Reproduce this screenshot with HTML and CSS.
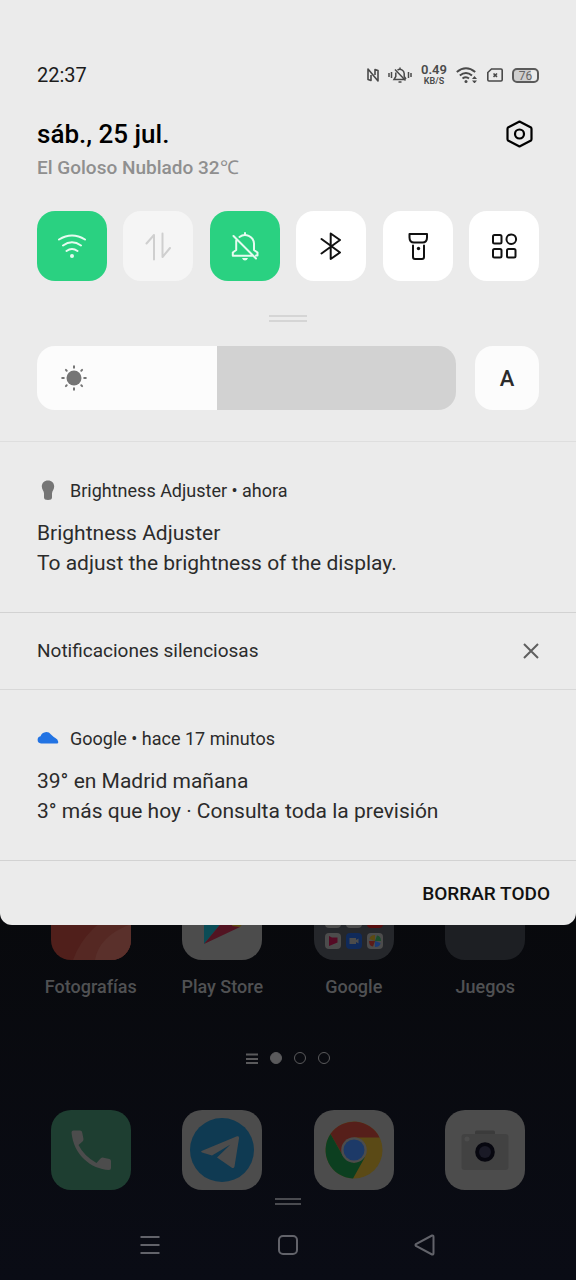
FILE: index.html
```html
<!DOCTYPE html>
<html lang="es">

<head>
    <meta charset="UTF-8">
    <meta name="viewport" content="width=device-width, initial-scale=1.0">
    <title>Notificaciones</title>
    <link rel="stylesheet" href="styles.css">
</head>

<body>

    <main class="panel">
        <section class="quick-settings">
            <div class="status-bar">
                <span class="clock">22:37</span>
                <div class="status-icons">
                    <svg width="12" height="14" viewBox="0 0 12 14" fill="none" stroke="#4a4a4a" stroke-width="1.600" stroke-linejoin="round">
                        <path d="M4 7V12.500L1 11.500V1L11 13V2.500L8 1.500V7" />
                    </svg>
                    <svg width="24" height="16" viewBox="0 0 24 16" fill="none" stroke="#4a4a4a" stroke-width="1.500">
                        <path d="M1 6v4M3.500 5v6M20.500 5v6M23 6v4" />
                        <path d="M9.500 3.200A4.200 4.200 0 0 1 16.200 6.500V9.500L18 12M7.800 5.500V9.500L6 12.500H16.500M7 2.500L17.500 13.500M12 0.500V2M10.500 15H13.500" />
                    </svg>
                    <div class="speed">
                        <span class="speed-value">0.49</span>
                        <span class="speed-unit">KB/S</span>
                    </div>
                    <svg width="22" height="16" viewBox="0 0 22 16" fill="none" stroke="#4a4a4a" stroke-width="2">
                        <path d="M.8 5Q10 -2.500 19.200 5M3.800 8.500Q10 3.500 16 8.500M6.500 11.500Q10 9 13 11.500" />
                        <circle cx="10" cy="14.500" r="1.500" fill="#4a4a4a" stroke="none" />
                        <path d="M16 12L18.500 9L21 12zM16 13.500L18.500 16.500L21 13.500z" fill="#4a4a4a" stroke="none" />
                    </svg>
                    <svg width="16" height="14" viewBox="0 0 16 14" fill="none" stroke="#4a4a4a" stroke-width="1.600">
                        <path d="M4.500 1H14Q15.200 1 15.200 2.200V11.800Q15.200 13 14 13H2Q.8 13 .8 11.800V4.500z" />
                        <path d="M6.500 5.500L10 8.800M10 5.500L6.500 8.800" />
                    </svg>
                    <div class="battery">76</div>
                </div>
            </div>

            <header class="date-row">
                <div>
                    <h1 class="date">sáb., 25 jul.</h1>
                    <p class="weather">El Goloso Nublado 32℃</p>
                </div>
                <button class="settings" aria-label="Ajustes">
                    <svg width="28" height="28" viewBox="0 0 28 28" fill="none" stroke="#000" stroke-width="2.200" stroke-linejoin="round">
                        <path d="M14.500 1.500L26 7.500Q26.500 8 26.500 9V19Q26.500 20 26 20.500L14.500 26.500L3 20.500Q2.500 20 2.500 19V9Q2.500 8 3 7.500z" />
                        <circle cx="14.500" cy="14" r="4.500" />
                    </svg>
                </button>
            </header>

            <div class="tiles">
                <button class="tile tile-on" aria-label="Wi-Fi">
                    <svg class="tile-icon" viewBox="0 0 30 30">
                        <path d="M2 8.500Q15 .5 28 8.500M6 14.500Q15 8 24 14.500M9.500 20Q15 16 20.500 20" />
                        <circle class="solid" cx="15" cy="25" r="2" />
                    </svg>
                </button>
                <button class="tile tile-off" aria-label="Datos móviles">
                    <svg class="tile-icon" viewBox="0 0 30 30">
                        <path d="M3.500 12.500L11 4V28.500M19.500 2.500V26L27 17" />
                    </svg>
                </button>
                <button class="tile tile-on" aria-label="Silencio">
                    <svg class="tile-icon" viewBox="0 0 30 30">
                        <path d="M9.500 6A9 9 0 0 1 24 12.500V19L27.500 21.500V24.500H26M6.200 9.500V19L2.800 21.500V24.800H22M3.500 5L26 27.500M15 2V4" />
                        <path class="solid" d="M12 27H18Q17 29.500 15 29.500T12 27z" />
                    </svg>
                </button>
                <button class="tile" aria-label="Bluetooth">
                    <svg class="tile-icon" viewBox="0 0 30 30">
                        <path d="M5.500 8L24 21.500L14.700 28V2.500L24 9L5.500 22.500" />
                    </svg>
                </button>
                <button class="tile" aria-label="Linterna">
                    <svg class="tile-icon" viewBox="0 0 30 30">
                        <path d="M6.500 3H24V6.500Q24 11.500 19.500 11.500H11Q6.500 11.500 6.500 6.500zM10 14.500V26Q10 28 12 28H19Q21 28 21 26V14.500" />
                        <circle class="solid" cx="15.500" cy="17.500" r="1.700" />
                    </svg>
                </button>
                <button class="tile" aria-label="Más ajustes">
                    <svg class="tile-icon" viewBox="0 0 30 30">
                        <rect x="4" y="4" width="8.500" height="8.500" rx="1.500" />
                        <circle cx="22.300" cy="8.200" r="4.800" />
                        <rect x="4" y="18" width="8.500" height="8.500" rx="1.500" />
                        <rect x="18" y="18" width="8.500" height="8.500" rx="1.500" />
                    </svg>
                </button>
            </div>

            <div class="handle"></div>

            <div class="brightness-row">
                <div class="brightness">
                    <input class="brightness-slider" type="range" min="0" max="100" value="43" aria-label="Brillo" style="--level: 43%">
                    <svg class="sun" viewBox="0 0 26 26" stroke="#757575" stroke-width="2" stroke-linecap="round">
                        <circle cx="13" cy="13" r="7.500" fill="#757575" stroke="none" />
                        <path d="M13 1.200V2.800M13 23.200V24.800M1.200 13H2.800M23.200 13H24.800M4.900 4.900L5.700 5.700M20.300 20.300L21.100 21.100M4.900 21.100L5.700 20.300M20.300 5.700L21.100 4.900" />
                    </svg>
                </div>
                <button class="auto" aria-label="Brillo automático">A</button>
            </div>
        </section>

        <article class="notification">
            <div class="notification-app">
                <svg width="22" height="22" viewBox="0 0 22 22" fill="#757575">
                    <path d="M11 .5C7.200 .5 4.800 3.100 4.800 6.500C4.800 9.500 7 11 7 13.500V17.500Q7 20 11 20T15 17.500V13.500C15 11 17.200 9.500 17.200 6.500C17.200 3.100 14.800 .5 11 .5z" />
                </svg>
                <span>Brightness Adjuster • ahora</span>
            </div>
            <h2 class="notification-text">Brightness Adjuster</h2>
            <p class="notification-text">To adjust the brightness of the display.</p>
        </article>

        <div class="silent-row">
            <h2 class="silent-title">Notificaciones silenciosas</h2>
            <button class="close" aria-label="Cerrar">
                <svg width="16" height="16" viewBox="0 0 16 16" stroke="#5f5f5f" stroke-width="2">
                    <path d="M1 1L15 15M15 1L1 15" />
                </svg>
            </button>
        </div>

        <article class="notification">
            <div class="notification-app">
                <svg width="22" height="22" viewBox="0 0 22 22" fill="#2273e3">
                    <path d="M4 15.500A3.700 3.700 0 0 1 3.500 8.200A6 6 0 0 1 14 6.500Q16.500 9 18 9.700Q21 11 21.300 14Q21.300 15.500 20 15.500z" />
                </svg>
                <span>Google • hace 17 minutos</span>
            </div>
            <h2 class="notification-text">39° en Madrid mañana</h2>
            <p class="notification-text">3° más que hoy · Consulta toda la previsión</p>
        </article>

        <footer class="panel-footer">
            <button class="clear-all">BORRAR TODO</button>
        </footer>
    </main>

    <section class="home">
        <div class="apps">
            <a class="app" href="#">
                <svg class="app-icon" viewBox="0 0 80 80">
                    <rect width="80" height="80" fill="#501f1b" />
                    <path d="M22 80Q34 45 80 24V80z" fill="#552823" />
                    <path d="M44 80Q48 56 80 44V80z" fill="#5a302b" />
                </svg>
                <span>Fotografías</span>
            </a>
            <a class="app" href="#">
                <svg class="app-icon" viewBox="0 0 80 80">
                    <rect width="80" height="80" fill="#4c4c4c" />
                    <path d="M22 16V64L42 40z" fill="#0b4c56" />
                    <path d="M22 64L41 41L51 45L58 47z" fill="#521422" />
                    <path d="M50 46L52 34L64 40L58 47z" fill="#5c4a12" />
                </svg>
                <span>Play Store</span>
            </a>
            <a class="app" href="#">
                <svg class="app-icon" viewBox="0 0 80 80">
                    <rect width="80" height="80" fill="#25272b" />
                    <rect x="11" y="32" width="16" height="16" rx="4" fill="#4c4c4c" />
                    <rect x="32" y="32" width="16" height="16" rx="4" fill="#4c4c4c" />
                    <rect x="53" y="32" width="16" height="16" rx="4" fill="#560d0d" />
                    <rect x="11" y="53" width="16" height="16" rx="4" fill="#4c4c4c" />
                    <path d="M15 56L18 57.500L23.500 57.500V62.500L15 66z" fill="#540a24" />
                    <rect x="32" y="53" width="16" height="16" rx="4" fill="#102a5a" />
                    <path d="M35.500 58h6.500v2l2.500-1.500v5L42 62v2h-6.500z" fill="#4c4c4c" />
                    <rect x="53" y="53" width="16" height="16" rx="4" fill="#4c4c4c" />
                    <path d="M61 61V55Q56 55 55.500 59z" fill="#5c4a12" />
                    <path d="M61 61H67Q67 56 63 55.500z" fill="#1b4d2c" />
                    <path d="M61 61V67Q66 67 66.500 63z" fill="#1c3b75" />
                    <path d="M61 61H55Q55 66 59 66.500z" fill="#5c1c18" />
                </svg>
                <span>Google</span>
            </a>
            <a class="app" href="#">
                <svg class="app-icon" viewBox="0 0 80 80">
                    <rect width="80" height="80" fill="#1d1f23" />
                </svg>
                <span>Juegos</span>
            </a>
        </div>

        <div class="pages">
            <svg width="12" height="12" viewBox="0 0 12 12" stroke="#5a5a5c" stroke-width="2">
                <path d="M0 2.500H12M0 7H12M0 11H12" />
            </svg>
            <span class="dot dot-current"></span>
            <span class="dot"></span>
            <span class="dot"></span>
        </div>

        <div class="apps">
            <a class="app" href="#" aria-label="Teléfono">
                <svg class="app-icon" viewBox="0 0 80 80">
                    <rect width="80" height="80" fill="#1e3e31" />
                    <path d="M22.500 20.500H29Q31 20.500 31.200 22.500L32.500 29Q32.500 30.500 31.500 31.500L27.500 35Q33 46 45.500 53L49 49Q50 47.500 51.500 47.500L58.500 49Q60 49.500 60 51V58Q60 60 58 60C40 59 22.500 45 20.500 22.500Q20.500 20.500 22.500 20.500z" fill="#4c4c4c" />
                </svg>
            </a>
            <a class="app" href="#" aria-label="Telegram">
                <svg class="app-icon" viewBox="0 0 80 80">
                    <rect width="80" height="80" fill="#4c4c4c" />
                    <circle cx="40" cy="40" r="32" fill="#0f3a52" />
                    <path d="M19.500 41L55 26.300Q57.500 25.500 57 28.500L52.500 56.500Q52 59 49.500 57.500L35 47.500L48.500 34.500L30 45.500L20 42.500Q18.500 41.800 19.500 41z" fill="#4c4c4c" />
                </svg>
            </a>
            <a class="app" href="#" aria-label="Chrome">
                <svg class="app-icon" viewBox="0 0 80 80">
                    <rect width="80" height="80" fill="#4c4c4c" />
                    <circle cx="40" cy="40" r="28.500" fill="#5b4a16" />
                    <path d="M40 27.500H65.500A28.500 28.500 0 0 0 16.500 24L28 44z" fill="#561f1a" />
                    <path d="M16.500 24A28.500 28.500 0 0 0 39 68.500L51 47L40 53L29 46z" fill="#0c3f20" />
                    <circle cx="40" cy="40" r="12.800" fill="#4c4c4c" />
                    <circle cx="40" cy="40" r="10.500" fill="#1d3a68" />
                </svg>
            </a>
            <a class="app" href="#" aria-label="Cámara">
                <svg class="app-icon" viewBox="0 0 80 80">
                    <rect width="80" height="80" fill="#4c4c4c" />
                    <rect x="30" y="20.500" width="20" height="5" rx="1.500" fill="#3b3b3b" />
                    <rect x="16.500" y="24" width="47" height="36" rx="3" fill="#424242" />
                    <circle cx="22" cy="29" r="2.500" fill="#4c4c4c" />
                    <circle cx="40" cy="42" r="9.800" fill="#07070f" />
                    <circle cx="40" cy="42" r="6" fill="#1a1a26" />
                </svg>
            </a>
        </div>

        <div class="handle handle-dark"></div>

        <nav class="nav">
            <button class="nav-button" aria-label="Recientes">
                <svg viewBox="0 0 24 24"><path d="M2.500 4H21.500M2.500 12H21.500M2.500 20H21.500" /></svg>
            </button>
            <button class="nav-button" aria-label="Inicio">
                <svg viewBox="0 0 24 24"><rect x="3" y="3" width="18" height="18" rx="4" /></svg>
            </button>
            <button class="nav-button" aria-label="Atrás">
                <svg viewBox="0 0 24 24"><path d="M18 2.500Q19.500 2 19.500 4V20Q19.500 22 18 21.500L2 13Q1 12 2 11z" /></svg>
            </button>
        </nav>
    </section>

</body>

</html>
```

FILE: styles.css
```css
* {
    box-sizing: border-box;
}

body {
    font-family: Roboto, sans-serif;
    background: linear-gradient(#08090c 70%, #0a0c15);
    min-height: 100vh;
    margin: 0;
}

h1,
h2,
p {
    margin: 0;
    font-weight: 400;
}

button {
    font-family: inherit;
    border: none;
    padding: 0;
    background: none;
    cursor: pointer;
    display: flex;
    justify-content: center;
    align-items: center;
}

svg {
    display: block;
}

/* Notification panel */
.panel {
    position: relative;
    z-index: 1;
    background-color: #ebebeb;
    border-radius: 0 0 12px 12px;
    color: #2b2b2b;
}

.quick-settings {
    padding: 60px 37px 31px;
    border-bottom: 1px solid #dedede;
}

.status-bar {
    display: flex;
    justify-content: space-between;
    align-items: center;
    height: 30px;
    margin-bottom: 28px;
}

.clock {
    font-size: 20px;
    color: #1c1c1c;
}

.status-icons {
    display: flex;
    align-items: center;
    gap: 9px;
    color: #4a4a4a;
}

.speed {
    display: flex;
    flex-direction: column;
    align-items: center;
    width: 26px;
    font-weight: 600;
}

.speed-value {
    font-size: 13px;
    line-height: 12px;
}

.speed-unit {
    font-size: 9px;
    line-height: 10px;
}

.battery {
    width: 27px;
    height: 15px;
    border: 2px solid #5a5a5a;
    border-radius: 5px;
    background: linear-gradient(90deg, #cfcfcf 76%, #ebebeb 76%);
    font-size: 12px;
    line-height: 12px;
    text-align: center;
    color: #666;
}

.date-row {
    display: flex;
    justify-content: space-between;
    align-items: flex-start;
    margin-bottom: 31px;
}

.date {
    font-size: 26px;
    line-height: 32px;
    font-weight: 500;
    color: #000;
    margin-bottom: 6px;
}

.weather {
    font-size: 19px;
    line-height: 24px;
    font-weight: 500;
    color: #8f8f8f;
}

.settings {
    width: 40px;
    height: 32px;
}

.tiles {
    display: flex;
    justify-content: space-between;
}

.tile {
    width: 70px;
    height: 70px;
    border-radius: 18px;
    background-color: #fff;
    color: #111;
}

.tile-on {
    background-color: #2ad181;
    color: #e6fbf0;
}

.tile-off {
    background-color: #f5f5f5;
    color: #cfcfcf;
}

.tile-icon {
    width: 30px;
    height: 30px;
    fill: none;
    stroke: currentColor;
    stroke-width: 2;
    stroke-linecap: round;
    stroke-linejoin: round;
}

.tile-icon .solid {
    fill: currentColor;
    stroke: none;
}

.handle {
    width: 38px;
    height: 7px;
    margin: 34px auto 24px;
    border-top: 2px solid #d5d5d5;
    border-bottom: 2px solid #d5d5d5;
}

.brightness-row {
    display: flex;
    gap: 19px;
}

.brightness {
    position: relative;
    flex: 1;
    height: 64px;
}

.brightness-slider {
    appearance: none;
    display: block;
    width: 100%;
    height: 100%;
    margin: 0;
    border-radius: 18px;
    background: linear-gradient(90deg, #fcfcfc var(--level), #d2d2d2 var(--level));
}

.brightness-slider::-webkit-slider-thumb {
    appearance: none;
    width: 2px;
    height: 64px;
    background: transparent;
}

.sun {
    position: absolute;
    left: 24px;
    top: 19px;
    width: 26px;
    height: 26px;
    pointer-events: none;
}

.auto {
    width: 64px;
    height: 64px;
    border-radius: 18px;
    background-color: #fcfcfc;
    color: #2b2b2b;
    font-size: 22px;
    font-weight: 500;
}

.notification {
    padding: 37px 37px 34px;
    border-bottom: 1px solid #d2d2d2;
}

.notification-app {
    display: flex;
    align-items: center;
    gap: 11px;
    font-size: 18px;
    line-height: 24px;
    margin-bottom: 15px;
}

.notification-text {
    font-size: 21px;
    line-height: 30px;
}

.silent-row {
    display: flex;
    justify-content: space-between;
    align-items: center;
    height: 77px;
    padding: 0 37px;
    border-bottom: 1px solid #d8d8d8;
}

.silent-title {
    font-size: 19px;
    line-height: 24px;
}

.panel-footer {
    display: flex;
    justify-content: flex-end;
    align-items: center;
    height: 64px;
    padding: 0 26px;
}

.clear-all {
    font-size: 19px;
    font-weight: 500;
    color: #111;
}

/* Home screen, its first row of icons goes under the panel */
.home {
    margin-top: -45px;
}

.apps {
    display: grid;
    grid-template-columns: repeat(4, 1fr);
    padding: 0 25px;
}

.app {
    display: flex;
    flex-direction: column;
    align-items: center;
    gap: 15px;
    font-size: 18px;
    line-height: 24px;
    font-weight: 500;
    color: #505153;
    text-decoration: none;
}

.app-icon {
    width: 80px;
    height: 80px;
    border-radius: 20px;
}

.pages {
    display: flex;
    justify-content: center;
    gap: 12px;
    margin: 53px 0 46px;
}

.dot {
    width: 12px;
    height: 12px;
    border: 1px solid #5a5a5c;
    border-radius: 50%;
}

.dot-current {
    background-color: #5a5a5c;
}

.handle-dark {
    width: 26px;
    margin: 8px auto 28px;
    border-color: #4a4b50;
}

.nav {
    display: flex;
    justify-content: space-between;
    padding: 0 24%;
}

.nav-button {
    width: 24px;
    height: 24px;
}

.nav-button svg {
    width: 24px;
    height: 24px;
    fill: none;
    stroke: #62636a;
    stroke-width: 2;
}
```
